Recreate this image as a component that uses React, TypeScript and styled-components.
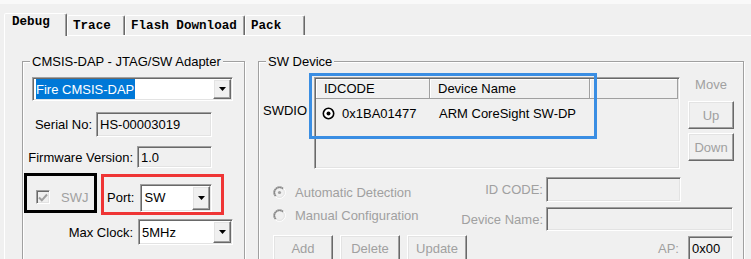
import React from 'react';
import styled, { createGlobalStyle, css } from 'styled-components';

const GlobalStyle = createGlobalStyle`
  html, body {
    margin: 0;
    padding: 0;
    background: #f0f0f0;
  }

  body {
    width: 751px;
    height: 259px;
    overflow: hidden;
    font-family: 'Liberation Sans', Arial, sans-serif;
    font-size: 13px;
    color: #000;
  }
`;

const sunken = css`
  box-sizing: border-box;
  border: 1px solid;
  border-color: #a0a0a0 #fff #fff #a0a0a0;
  box-shadow: inset 1px 1px 0 #696969, inset -1px -1px 0 #e3e3e3;
`;

const raised = css`
  box-sizing: border-box;
  border: 1px solid;
  border-color: #fff #696969 #696969 #fff;
  box-shadow: inset -1px -1px 0 #a0a0a0, inset 1px 1px 0 #e3e3e3;
`;

const Window = styled.div`
  border-top: 4px solid #f9f9f9;
  padding-top: 9px;
  height: 246px;
  overflow: hidden;
`;

const TabStrip = styled.div`
  display: flex;
  align-items: flex-end;
  height: 22px;
  padding-left: 4px;
`;

const Tab = styled.div<{ $active?: boolean; $w: number }>`
  position: relative;
  z-index: ${({ $active }) => ($active ? 2 : 1)};
  box-sizing: border-box;
  width: ${({ $w }) => $w}px;
  height: ${({ $active }) => ($active ? 23 : 20)}px;
  margin-bottom: ${({ $active }) => ($active ? -1 : 0)}px;
  padding: ${({ $active }) => ($active ? '0 0 0 7px' : '2px 0 0 5px')};
  border: 1px solid;
  border-bottom: none;
  border-color: #fff #696969 transparent #fff;
  border-radius: 2px 2px 0 0;
  box-shadow: inset -1px 0 0 #a0a0a0;
  background: #f0f0f0;
  font: bold 12.6px/16px 'Liberation Mono', 'Courier New', monospace;
  white-space: nowrap;
`;

const Panel = styled.div`
  display: flex;
  align-items: flex-start;
  gap: 13px;
  margin-left: 4px;
  padding: 18px 0 0 17px;
  border-top: 1px solid #fff;
  border-left: 1px solid #fff;
  height: 240px;
`;

const Group = styled.fieldset<{ $w: number }>`
  box-sizing: border-box;
  width: ${({ $w }) => $w}px;
  min-width: 0;
  height: 230px;
  margin: 0;
  padding: 0;
  border: 1px solid #a0a0a0;
  box-shadow: inset 1px 1px 0 #fff, 1px 1px 0 #fff;
`;

const Legend = styled.legend`
  margin-left: 7px;
  padding: 0 2px;
  line-height: 15px;
  background: #f0f0f0;
`;

const Body = styled.div`
  display: flex;
  flex-direction: column;
`;

const Row = styled.div<{ $top?: number; $left?: number; $right?: number; $end?: boolean }>`
  display: flex;
  align-items: flex-start;
  justify-content: ${({ $end }) => ($end ? 'flex-end' : 'flex-start')};
  gap: 4px;
  margin-top: ${({ $top = 0 }) => $top}px;
  padding-left: ${({ $left = 0 }) => $left}px;
  padding-right: ${({ $right = 0 }) => $right}px;
`;

const LabelRow = styled(Row)<{ $gap?: number }>`
  align-items: center;
  gap: ${({ $gap = 4 }) => $gap}px;
`;

const Label = styled.span<{ $dim?: boolean }>`
  line-height: 15px;
  white-space: nowrap;
  color: ${({ $dim }) => ($dim ? '#a0a0a0' : '#000')};
`;

const Select = styled.div<{ $w: number; $h: number }>`
  ${sunken};
  display: flex;
  align-items: stretch;
  width: ${({ $w }) => $w}px;
  height: ${({ $h }) => $h}px;
  padding: 1px;
  background: #fff;
`;

const SelectValue = styled.div`
  flex: 1;
  display: flex;
  align-items: center;
  padding-left: 2px;
  white-space: nowrap;
`;

const Highlight = styled.span`
  display: flex;
  align-items: center;
  align-self: stretch;
  padding: 0 1px 0 0;
  background: #0078d7;
  color: #fff;
`;

const DropButton = styled.div`
  ${raised};
  display: flex;
  align-items: center;
  justify-content: center;
  width: 18px;
  background: #f0f0f0;
`;

const Field = styled.div<{ $w: number; $h: number }>`
  ${sunken};
  display: flex;
  align-items: center;
  width: ${({ $w }) => $w}px;
  height: ${({ $h }) => $h}px;
  padding-left: 3px;
  background: #f0f0f0;
  white-space: nowrap;
`;

const Callout = styled.div<{ $color: string; $w: number; $h: number }>`
  box-sizing: border-box;
  width: ${({ $w }) => $w}px;
  height: ${({ $h }) => $h}px;
  border: 3px solid ${({ $color }) => $color};
`;

const SwjFrame = styled(Callout)`
  display: flex;
  align-items: center;
  gap: 11px;
  padding: 8px 0 0 9px;
`;

const PortFrame = styled(Callout)`
  display: flex;
  align-items: center;
  gap: 6px;
  margin-top: 1px;
  padding: 6px 0 0 3px;
`;

const CheckBox = styled.div`
  ${sunken};
  width: 14px;
  height: 14px;
  background: #f0f0f0;
  display: flex;
  align-items: center;
  justify-content: center;
`;

const DeviceArea = styled.div`
  display: flex;
  align-items: flex-start;
  margin-top: 8px;
`;

const SideLabel = styled.span`
  width: 51px;
  margin-top: 26px;
  padding-left: 4px;
  line-height: 15px;
`;

const ListBox = styled.div`
  ${sunken};
  position: relative;
  width: 366px;
  height: 92px;
  padding: 1px;
  background: #f0f0f0;
`;

const ListHeader = styled.div`
  display: grid;
  grid-template-columns: 114px 160px 1fr;
  height: 20px;
`;

const HeaderCell = styled.div`
  box-sizing: border-box;
  padding-left: 8px;
  line-height: 19px;
  border-right: 1px solid #a0a0a0;
  border-bottom: 1px solid #a0a0a0;
  box-shadow: inset 1px 1px 0 #fff;
  white-space: nowrap;
`;

const ListRow = styled.div`
  display: grid;
  grid-template-columns: 114px 160px;
  align-items: center;
  height: 18px;
  margin-top: 5px;
`;

const IdCell = styled.div`
  display: flex;
  align-items: center;
  gap: 7px;
  padding-left: 6px;
`;

const NameCell = styled.div`
  padding-left: 9px;
  white-space: nowrap;
`;

const DeviceCallout = styled(Callout)`
  position: absolute;
  left: -6px;
  top: -5px;
`;

const MoveColumn = styled.div`
  display: flex;
  flex-direction: column;
  align-items: center;
  width: 46px;
  margin-left: 8px;
`;

const Button = styled.button<{ $w: number; $h: number; $top?: number }>`
  ${raised};
  width: ${({ $w }) => $w}px;
  height: ${({ $h }) => $h}px;
  margin: ${({ $top = 0 }) => $top}px 0 0;
  padding: 0;
  background: #f0f0f0;
  color: #a0a0a0;
  font: inherit;
`;

const ConfigArea = styled.div`
  display: flex;
  align-items: flex-start;
  margin-top: 8px;
`;

const RadioColumn = styled.div`
  display: flex;
  flex-direction: column;
  margin: 4px 0 0 14px;
`;

const RadioOption = styled.div`
  display: flex;
  align-items: center;
  gap: 9px;
  height: 23px;
  color: #a0a0a0;
  white-space: nowrap;
`;

const FieldGrid = styled.div`
  display: grid;
  grid-template-columns: auto 187px;
  grid-template-rows: 25px 24px;
  align-items: center;
  column-gap: 3px;
  row-gap: 5px;
  margin: 0 10px 0 auto;

  & > span {
    justify-self: end;
  }
`;

const ActionBar = styled.div`
  display: flex;
  align-items: center;
  gap: 7px;
  margin-top: 4px;
  padding: 0 10px 0 14px;
`;

const ApGroup = styled.div`
  display: flex;
  align-items: center;
  gap: 9px;
  margin-left: auto;
`;

const Arrow = () => (
  <svg width="7" height="4" viewBox="0 0 7 4">
    <polygon points="0,0 7,0 3.5,4" fill="#000" />
  </svg>
);

const Check = () => (
  <svg width="10" height="9" viewBox="0 0 10 9">
    <path d="M1 4.5 L3.8 7.3 L9 1.5" fill="none" stroke="#a0a0a0" strokeWidth="2" />
  </svg>
);

const ListRadio = () => (
  <svg width="13" height="13" viewBox="0 0 13 13">
    <circle cx="6.5" cy="6.5" r="5.2" fill="#fff" stroke="#000" strokeWidth="1.6" />
    <circle cx="6.5" cy="6.5" r="2" fill="#000" />
  </svg>
);

// classic 3D radio, drawn greyed out
const DimRadio = ({ checked }: { checked?: boolean }) => {
  const arc = (r: number, from: 'tl' | 'br') => {
    const d = r * Math.SQRT1_2;
    const bl = `${6.5 - d} ${6.5 + d}`;
    const tr = `${6.5 + d} ${6.5 - d}`;
    return from === 'tl' ? `M${bl} A${r} ${r} 0 0 1 ${tr}` : `M${tr} A${r} ${r} 0 0 1 ${bl}`;
  };
  return (
    <svg width="13" height="13" viewBox="0 0 13 13">
      <circle cx="6.5" cy="6.5" r="5" fill="#f0f0f0" />
      <path d={arc(5.9, 'tl')} fill="none" stroke="#a0a0a0" strokeWidth="1" />
      <path d={arc(5.9, 'br')} fill="none" stroke="#fff" strokeWidth="1" />
      <path d={arc(4.9, 'tl')} fill="none" stroke="#696969" strokeWidth="1" />
      <path d={arc(4.9, 'br')} fill="none" stroke="#e3e3e3" strokeWidth="1" />
      {checked && <circle cx="6.5" cy="6.5" r="1.6" fill="#a0a0a0" />}
    </svg>
  );
};

const App: React.FC = () => (
  <>
    <GlobalStyle />
    <Window>
      <TabStrip>
        <Tab $active $w={63}>Debug</Tab>
        <Tab $w={58}>Trace</Tab>
        <Tab $w={120}>Flash Download</Tab>
        <Tab $w={60}>Pack</Tab>
      </TabStrip>

      <Panel>
        <Group $w={223}>
          <Legend>CMSIS-DAP - JTAG/SW Adapter</Legend>
          <Body>
            <Row $top={8} $left={9}>
              <Select $w={201} $h={24}>
                <SelectValue>
                  <Highlight>Fire CMSIS-DAP</Highlight>
                </SelectValue>
                <DropButton>
                  <Arrow />
                </DropButton>
              </Select>
            </Row>

            <LabelRow $top={11} $right={32} $end>
              <Label>Serial No:</Label>
              <Field $w={116} $h={25}>HS-00003019</Field>
            </LabelRow>

            <LabelRow $top={9} $right={32} $end>
              <Label>Firmware Version:</Label>
              <Field $w={75} $h={22}>1.0</Field>
            </LabelRow>

            <Row $top={5} $left={1}>
              <SwjFrame $color="#000" $w={73} $h={40}>
                <CheckBox>
                  <Check />
                </CheckBox>
                <Label $dim>SWJ</Label>
              </SwjFrame>
              <PortFrame $color="#ef3535" $w={123} $h={41}>
                <Label>Port:</Label>
                <Select $w={72} $h={28}>
                  <SelectValue>SW</SelectValue>
                  <DropButton>
                    <Arrow />
                  </DropButton>
                </Select>
              </PortFrame>
            </Row>

            <LabelRow $top={4} $right={11} $gap={5} $end>
              <Label>Max Clock:</Label>
              <Select $w={95} $h={26}>
                <SelectValue>5MHz</SelectValue>
                <DropButton>
                  <Arrow />
                </DropButton>
              </Select>
            </LabelRow>
          </Body>
        </Group>

        <Group $w={486}>
          <Legend>SW Device</Legend>
          <Body>
            <DeviceArea>
              <SideLabel>SWDIO</SideLabel>
              <ListBox>
                <ListHeader>
                  <HeaderCell>IDCODE</HeaderCell>
                  <HeaderCell>Device Name</HeaderCell>
                  <HeaderCell />
                </ListHeader>
                <ListRow>
                  <IdCell>
                    <ListRadio />
                    0x1BA01477
                  </IdCell>
                  <NameCell>ARM CoreSight SW-DP</NameCell>
                </ListRow>
                <DeviceCallout $color="#3a8ee3" $w={288} $h={66} />
              </ListBox>
              <MoveColumn>
                <Label $dim>Move</Label>
                <Button disabled $w={46} $h={28} $top={9}>Up</Button>
                <Button disabled $w={46} $h={28} $top={4}>Down</Button>
              </MoveColumn>
            </DeviceArea>

            <ConfigArea>
              <RadioColumn>
                <RadioOption>
                  <DimRadio checked />
                  Automatic Detection
                </RadioOption>
                <RadioOption>
                  <DimRadio />
                  Manual Configuration
                </RadioOption>
              </RadioColumn>
              <FieldGrid>
                <Label $dim>ID CODE:</Label>
                <Field $w={135} $h={25} />
                <Label $dim>Device Name:</Label>
                <Field $w={187} $h={24} />
              </FieldGrid>
            </ConfigArea>

            <ActionBar>
              <Button disabled $w={60} $h={27}>Add</Button>
              <Button disabled $w={60} $h={27}>Delete</Button>
              <Button disabled $w={60} $h={27}>Update</Button>
              <ApGroup>
                <Label $dim>AP:</Label>
                <Field $w={45} $h={26}>0x00</Field>
              </ApGroup>
            </ActionBar>
          </Body>
        </Group>
      </Panel>
    </Window>
  </>
);

export default App;
